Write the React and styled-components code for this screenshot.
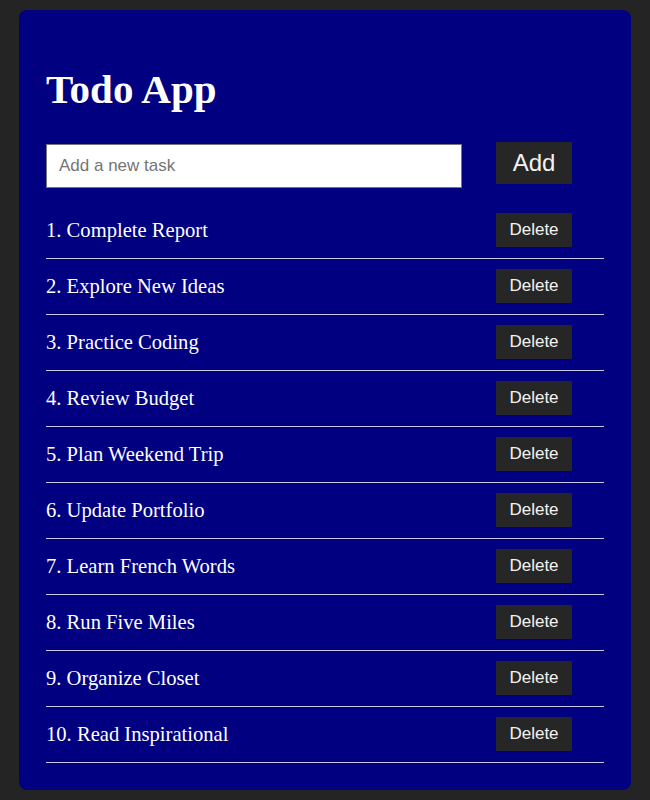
import React, { useState } from "react";
import styled, { createGlobalStyle } from "styled-components";

const GlobalStyle = createGlobalStyle`
  body {
    margin: 0;
    background-color: #242424;
    font-family: "Liberation Serif", "Times New Roman", serif;
  }
`;

const Page = styled.div`
  padding: 10px 0;
`;

const Card = styled.div`
  width: 612px;
  margin: 0 auto;
  padding: 27px;
  box-sizing: border-box;
  background-color: #000080;
  border-radius: 8px;
  color: #ffffff;
`;

const Title = styled.h1`
  margin: 29px 0 30px 0;
  font-size: 41px;
  line-height: 46px;
  font-weight: bold;
`;

const FormRow = styled.form`
  display: flex;
  align-items: baseline;
  gap: 34px;
`;

const TaskInput = styled.input`
  width: 416px;
  height: 44px;
  box-sizing: border-box;
  padding: 0 12px;
  border: 1px solid #767676;
  font-family: "Liberation Sans", Arial, sans-serif;
  font-size: 17px;
  color: #222;
  background: #fff;
  outline: none;

  &::placeholder {
    color: #757575;
  }
`;

const Button = styled.button`
  width: 76px;
  height: ${(p) => (p.$big ? "42px" : "34px")};
  padding: 0;
  border: none;
  background-color: #262626;
  color: #f2f2f2;
  font-family: "Liberation Sans", Arial, sans-serif;
  font-size: ${(p) => (p.$big ? "24px" : "17px")};
  cursor: pointer;
`;

const List = styled.ul`
  list-style: none;
  margin: 15px 0 0 0;
  padding: 0;
`;

const Row = styled.li`
  display: flex;
  justify-content: space-between;
  align-items: center;
  padding: 10px 32px 11px 0;
  border-bottom: 1px solid #c8c8e0;
`;

const TaskText = styled.span`
  font-size: 20.6px;
  color: #ffffff;
`;

const initialTasks = [
  "Complete Report",
  "Explore New Ideas",
  "Practice Coding",
  "Review Budget",
  "Plan Weekend Trip",
  "Update Portfolio",
  "Learn French Words",
  "Run Five Miles",
  "Organize Closet",
  "Read Inspirational",
];

const App = () => {
  const [tasks, setTasks] = useState(initialTasks);
  const [text, setText] = useState("");

  const handleSubmit = (e) => {
    e.preventDefault();
    if (!text.trim()) return;
    setTasks([...tasks, text.trim()]);
    setText("");
  };

  const removeTask = (index) => {
    setTasks(tasks.filter((_, i) => i !== index));
  };

  return (
    <Page>
      <GlobalStyle />
      <Card>
        <Title>Todo App</Title>
        <FormRow onSubmit={handleSubmit}>
          <TaskInput
            type="text"
            placeholder="Add a new task"
            value={text}
            onChange={(e) => setText(e.target.value)}
          />
          <Button $big type="submit">
            Add
          </Button>
        </FormRow>
        <List>
          {tasks.map((task, i) => (
            <Row key={i}>
              <TaskText>
                {i + 1}. {task}
              </TaskText>
              <Button onClick={() => removeTask(i)}>Delete</Button>
            </Row>
          ))}
        </List>
      </Card>
    </Page>
  );
};

export default App;
